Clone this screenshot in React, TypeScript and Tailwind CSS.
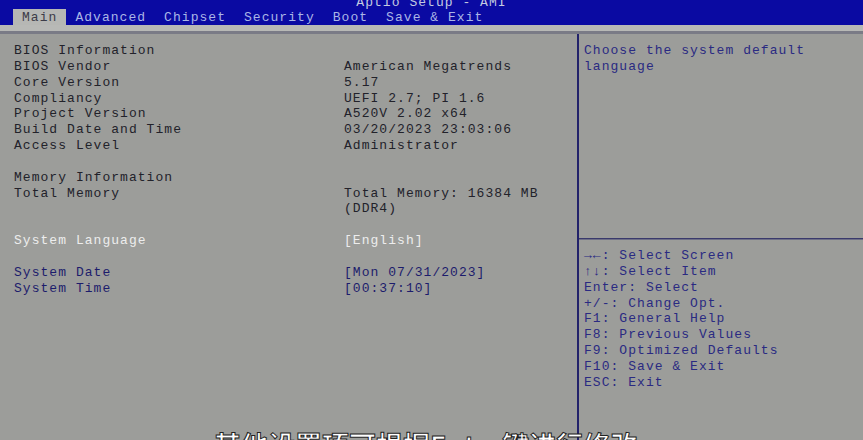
const TABS = ["Main", "Advanced", "Chipset", "Security", "Boot", "Save & Exit"];

const INFO: [string, string][] = [
  ["BIOS Vendor", "American Megatrends"],
  ["Core Version", "5.17"],
  ["Compliancy", "UEFI 2.7; PI 1.6"],
  ["Project Version", "A520V 2.02 x64"],
  ["Build Date and Time", "03/20/2023 23:03:06"],
  ["Access Level", "Administrator"],
];

const HELP: [string, string][] = [
  ["→←", ": Select Screen"],
  ["↑↓", ": Select Item"],
  ["", "Enter: Select"],
  ["", "+/-: Change Opt."],
  ["", "F1: General Help"],
  ["", "F8: Previous Values"],
  ["", "F9: Optimized Defaults"],
  ["", "F10: Save & Exit"],
  ["", "ESC: Exit"],
];

function Row({
  label,
  value,
  className,
}: {
  label: string;
  value?: React.ReactNode;
  className?: string;
}) {
  return (
    <div className={`flex ${className ?? ""}`}>
      <div className="w-[330px] shrink-0">{label}</div>
      <div>{value}</div>
    </div>
  );
}

export default function App() {
  return (
    <div className="relative h-[440px] w-[863px] overflow-hidden bg-[#9c9d9a] font-['Liberation_Mono',monospace] text-[13px] leading-[15.85px] tracking-[1.04px] text-[#22222a]">
      {/* header */}
      <div className="flex h-[25px] flex-col bg-[#0a0aa2]">
        <div className="-mt-[4px] h-[13px] text-center leading-[13px] text-[#c4cae0]">
          Aptio Setup - AMI
        </div>
        <div className="flex pl-[13px]">
          {TABS.map((tab, i) => (
            <div
              key={tab}
              className={
                i === 0
                  ? "h-[16px] bg-[#b6b7b4] px-[9px] leading-[17px] text-[#3c3c48]"
                  : "h-[16px] px-[9px] leading-[17px] text-[#aab6e6]"
              }
            >
              {tab}
            </div>
          ))}
        </div>
      </div>
      <div className="h-[6px] bg-[#b8b9b6]" />
      <div className="h-[3px] bg-[#7a7b86]" />

      <div className="flex h-[406px]">
        {/* left pane */}
        <div className="w-[577px] pl-[14px] pt-[9px]">
          <div>BIOS Information</div>
          {INFO.map(([k, v]) => (
            <Row key={k} label={k} value={v} />
          ))}
          <div className="h-[15.85px]" />
          <div>Memory Information</div>
          <Row
            label="Total Memory"
            value={
              <>
                Total Memory: 16384 MB
                <br />
                (DDR4)
              </>
            }
          />
          <div className="h-[15.85px]" />
          <Row label="System Language" value="[English]" className="text-[#ededed]" />
          <div className="h-[15.85px]" />
          <Row label="System Date" value="[Mon 07/31/2023]" className="text-[#1c1c6c]" />
          <Row label="System Time" value="[00:37:10]" className="text-[#1c1c6c]" />
        </div>

        {/* divider */}
        <div className="w-[2px] bg-[#22226a]" />

        {/* right pane */}
        <div className="flex flex-1 flex-col text-[#2a2a82]">
          <div className="h-[204px] pl-[5px] pt-[9px]">
            Choose the system default
            <br />
            language
          </div>
          <div className="h-[1px] bg-[#3a3a6c]" />
          <div className="h-[1px] bg-[#6e6f86]" />
          <div className="pl-[5px] pt-[8px]">
            {HELP.map(([arrows, text]) => (
              <div key={text}>
                {arrows && <span className="font-bold">{arrows}</span>}
                {text}
              </div>
            ))}
          </div>
        </div>
      </div>

      {/* subtitle overlay */}
      <div className="absolute left-[214px] top-[430px] whitespace-nowrap font-['Noto_Sans_CJK_SC',sans-serif] text-[27px] font-bold leading-[30px] tracking-normal text-white [-webkit-text-stroke:1px_#222]">
        其他设置项可根据Enter键进行修改
      </div>
    </div>
  );
}
